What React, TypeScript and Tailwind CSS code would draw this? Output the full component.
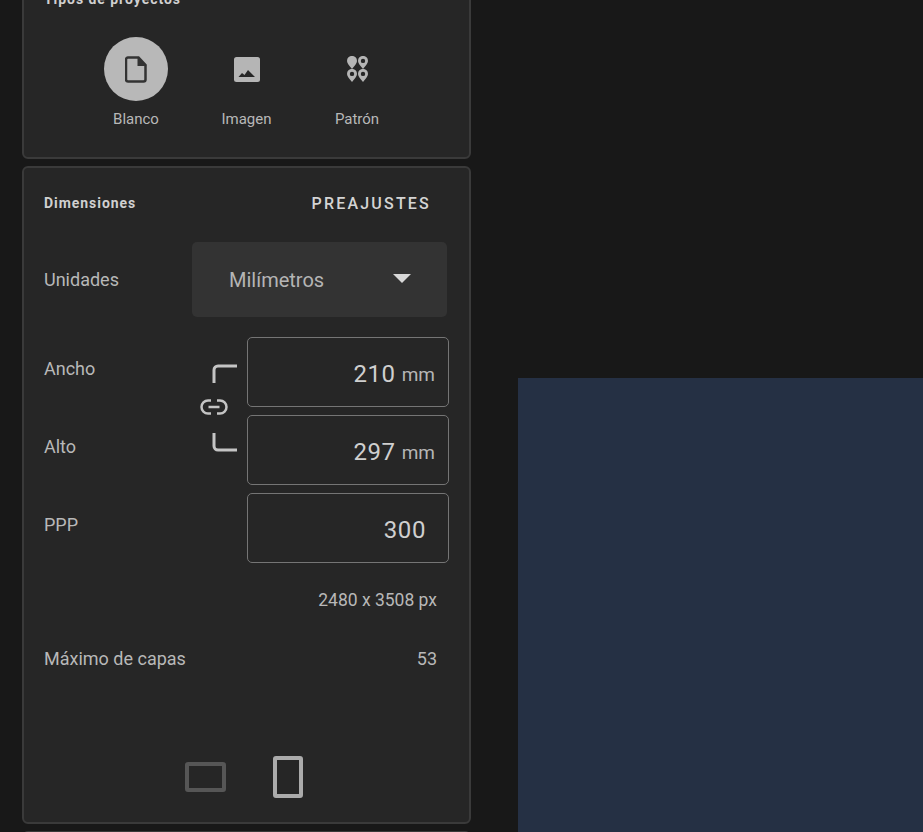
function FileIcon() {
  return (
    <svg width="22" height="27" viewBox="0 0 22 27" fill="none">
      <path d="M3 1.500h10.500l7 7.500v14.500a2 2 0 0 1-2 2h-15.500a2 2 0 0 1-2-2v-20a2 2 0 0 1 2-2z" stroke="#333333" strokeWidth="2.500" />
      <path d="M12.500 1v9h9z" fill="#333333" />
    </svg>
  );
}

function PictureIcon() {
  return (
    <svg width="26" height="25" viewBox="0 0 26 25">
      <rect width="26" height="25" rx="2.500" fill="#b5b5b5" />
      <path d="M4.500 20l3.500-4 2.500 2 3.500-5 7 7z" fill="#262626" />
    </svg>
  );
}

function Pin({ filled }: { filled?: boolean }) {
  return (
    <svg width="10" height="13" viewBox="0 0 10 13">
      <path d="M5 13C2.500 9.500 0 7.300 0 4.900a5 5 0 0 1 10 0C10 7.300 7.500 9.500 5 13z" fill="#b5b5b5" />
      {!filled && <circle cx="5" cy="4.900" r="2.200" fill="#262626" />}
    </svg>
  );
}

function PatternIcon() {
  return (
    <div className="grid grid-cols-2 gap-x-[1px]">
      <Pin filled />
      <Pin />
      <Pin />
      <Pin />
    </div>
  );
}

function LinkColumn() {
  return (
    <div className="row-span-2 flex flex-col items-start pt-[27px]">
      <svg width="26" height="20" viewBox="0 0 26 20" fill="none" className="ml-[7px]">
        <path d="M2 19V6a4 4 0 0 1 4-4h19" stroke="#c4c4c4" strokeWidth="3" />
      </svg>
      <svg width="28" height="18" viewBox="0 0 28 18" fill="none" className="mt-[14px] -ml-[5px]">
        <path d="M11 2.500H8a6.500 6.500 0 0 0 0 13h3M17 2.500h3a6.500 6.500 0 0 1 0 13h-3M8.500 9h11" stroke="#c4c4c4" strokeWidth="2.500" />
      </svg>
      <svg width="26" height="20" viewBox="0 0 26 20" fill="none" className="ml-[7px] mt-[16px]">
        <path d="M2 1v13a4 4 0 0 0 4 4h19" stroke="#c4c4c4" strokeWidth="3" />
      </svg>
    </div>
  );
}

function Field({ value, unit }: { value: string; unit?: string }) {
  return (
    <div className={`h-[70px] rounded-[5px] border border-[#757575] flex items-center justify-end ${unit ? "pr-[13px]" : "pr-[22px]"}`}>
      <span className="text-[24px] text-[#cfcfcf] tracking-[0.6px] mt-[3px]">{value}</span>
      {unit && <span className="text-[19px] text-[#b5b5b5] ml-[6px] mt-[6px]">{unit}</span>}
    </div>
  );
}

function ProjectType({ label, active, children }: { label: string; active?: boolean; children: React.ReactNode }) {
  return (
    <div className="w-[110.500px] flex flex-col items-center">
      <div className={`w-[64px] h-[64px] rounded-full flex items-center justify-center ${active ? "bg-[#b8b8b8]" : ""}`}>
        {children}
      </div>
      <span className="mt-[8px] text-[15px] leading-[20px] text-[#b8b8b8]">{label}</span>
    </div>
  );
}

export default function App() {
  return (
    <div className="h-[832px] overflow-hidden bg-[#181818] flex font-['Roboto',sans-serif]">
      <div className="w-[449px] ml-[22px] shrink-0 flex flex-col gap-[7px] -mt-[37px]">
        <section className="h-[196px] shrink-0 rounded-[6px] border-2 border-[#3a3a3a] bg-[#262626] pl-[20px] pr-[22px] pt-[24px]">
          <h2 className="text-[14px] leading-[20px] font-bold tracking-[0.95px] text-[#d0d0d0]">Tipos de proyectos</h2>
          <div className="flex justify-center mt-[28px] ml-[2px]">
            <ProjectType label="Blanco" active>
              <FileIcon />
            </ProjectType>
            <ProjectType label="Imagen">
              <PictureIcon />
            </ProjectType>
            <ProjectType label="Patrón">
              <PatternIcon />
            </ProjectType>
          </div>
        </section>

        <section className="h-[658px] shrink-0 rounded-[6px] border-2 border-[#3a3a3a] bg-[#262626] pl-[20px] pr-[22px] pt-[25px]">
          <div className="flex items-center justify-between h-[20px]">
            <h2 className="text-[14px] leading-[20px] font-bold tracking-[0.95px] text-[#d0d0d0]">Dimensiones</h2>
            <button className="text-[16px] font-medium tracking-[2.200px] text-[#d4d4d4] mr-[16px] mt-[1px]">PREAJUSTES</button>
          </div>

          <div className="flex items-center justify-between mt-[29px]">
            <span className="text-[18px] text-[#b8b8b8]">Unidades</span>
            <div className="w-[255px] h-[75px] rounded-[5px] bg-[#333333] flex items-center justify-between pl-[37px] pr-[36px]">
              <span className="text-[20px] text-[#b5b5b5]">Milímetros</span>
              <svg width="18" height="9" viewBox="0 0 18 9" className="-mt-[3px]">
                <path d="M0 0h18l-9 9z" fill="#d8d8d8" />
              </svg>
            </div>
          </div>

          <div className="grid grid-cols-[161px_42px_202px] gap-y-[8px] mt-[20px] w-[405px]">
            <span className="text-[18px] text-[#b8b8b8] mt-[18px]">Ancho</span>
            <LinkColumn />
            <Field value="210" unit="mm" />
            <span className="text-[18px] text-[#b8b8b8] mt-[18px]">Alto</span>
            <Field value="297" unit="mm" />
            <span className="text-[18px] text-[#b8b8b8] mt-[18px]">PPP</span>
            <span />
            <Field value="300" />
          </div>

          <div className="text-right pr-[10px] mt-[25px] text-[17.500px] leading-[24px] text-[#b8b8b8]">2480 x 3508 px</div>

          <div className="flex justify-between pr-[10px] mt-[35px] text-[18px] leading-[24px] text-[#b8b8b8]">
            <span>Máximo de capas</span>
            <span>53</span>
          </div>

          <div className="flex items-center mt-[85px] pl-[141px] gap-[47px]">
            <div className="w-[41px] h-[30px] rounded-[3px] border-[4px] border-[#565656]" />
            <div className="w-[30px] h-[42px] rounded-[3px] border-[4px] border-[#ababab]" />
          </div>
        </section>

        <section className="h-[40px] shrink-0 rounded-[6px] border-2 border-[#3a3a3a] bg-[#262626]" />
      </div>

      <div className="flex-1 pl-[47px] pt-[378px]">
        <div className="h-full bg-[#253044]" />
      </div>
    </div>
  );
}
